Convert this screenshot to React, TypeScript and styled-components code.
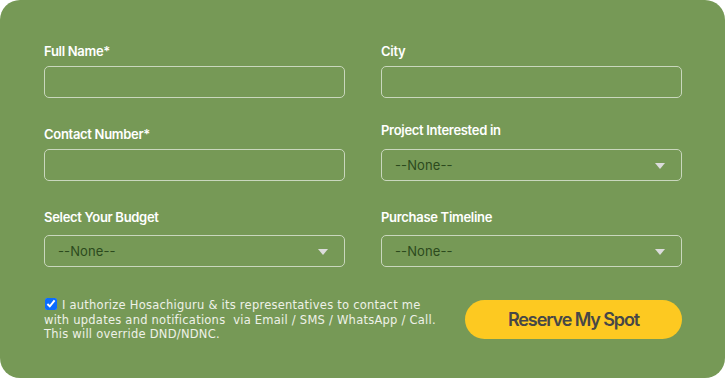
import React from 'react';
import styled, { createGlobalStyle } from 'styled-components';

const GlobalStyle = createGlobalStyle`
  html, body {
    margin: 0;
    padding: 0;
    background: #ffffff;
  }
  * {
    box-sizing: border-box;
  }
`;

const Panel = styled.form`
  width: 725px;
  height: 378px;
  background: #769956;
  border-radius: 20px;
  padding: 43px 43px 0 44px;
  font-family: Inter, 'Liberation Sans', sans-serif;
`;

const Row = styled.div<{ $mt?: number }>`
  display: grid;
  grid-template-columns: 301px 301px;
  column-gap: 36px;
  align-items: end;
  margin-top: ${p => p.$mt ?? 0}px;
`;

const Field = styled.div`
  display: flex;
  flex-direction: column;
`;

const Label = styled.label<{ $gap: number }>`
  font-size: 13px;
  line-height: 16px;
  font-weight: 600;
  letter-spacing: -0.3px;
  color: #ffffff;
  margin-bottom: ${p => p.$gap}px;
`;

const TextInput = styled.input`
  width: 100%;
  height: 32px;
  background: transparent;
  border: 1px solid #c9d7bd;
  border-radius: 5px;
  padding: 0 13px;
  font-family: inherit;
  font-size: 13px;
  color: #ffffff;

  &:focus {
    outline: none;
  }
`;

const SelectBox = styled.div`
  position: relative;
  height: 32px;
  border: 1px solid #c9d7bd;
  border-radius: 5px;
  display: flex;
  align-items: center;
  justify-content: space-between;
  padding: 0 16px 0 13px;
`;

const SelectValue = styled.span`
  font-size: 13px;
  color: #2c4a1d;
  letter-spacing: 0.1px;
`;

const Caret = styled.span`
  width: 0;
  height: 0;
  border-left: 5px solid transparent;
  border-right: 5px solid transparent;
  border-top: 6px solid #dcdcdc;
  margin-top: 1px;
`;

const Bottom = styled.div`
  display: flex;
  align-items: center;
  justify-content: space-between;
  margin-top: 31px;
`;

const Consent = styled.label`
  font-family: 'DejaVu Sans', 'Open Sans', sans-serif;
  font-size: 11.5px;
  line-height: 14.5px;
  color: #eef1e8;
  letter-spacing: 0.24px;
`;

const Check = styled.input`
  width: 12px;
  height: 12px;
  margin: 0 5px 0 1px;
  vertical-align: -1px;
  accent-color: #0a6cff;
`;

const ReserveButton = styled.button`
  width: 217px;
  height: 39px;
  border: none;
  border-radius: 20px;
  background: #fdc921;
  color: #474747;
  font-family: Inter, 'Liberation Sans', sans-serif;
  font-size: 18px;
  font-weight: 600;
  letter-spacing: -1.1px;
  cursor: pointer;
`;

function Select() {
  return (
    <SelectBox>
      <SelectValue>--None--</SelectValue>
      <Caret />
    </SelectBox>
  );
}

export default function App() {
  return (
    <>
      <GlobalStyle />
      <Panel onSubmit={e => e.preventDefault()}>
        <Row>
          <Field>
            <Label $gap={7}>Full Name*</Label>
            <TextInput type="text" />
          </Field>
          <Field>
            <Label $gap={7}>City</Label>
            <TextInput type="text" />
          </Field>
        </Row>
        <Row $mt={24}>
          <Field>
            <Label $gap={7}>Contact Number*</Label>
            <TextInput type="tel" />
          </Field>
          <Field>
            <Label $gap={11}>Project Interested in</Label>
            <Select />
          </Field>
        </Row>
        <Row $mt={28}>
          <Field>
            <Label $gap={10}>Select Your Budget</Label>
            <Select />
          </Field>
          <Field>
            <Label $gap={10}>Purchase Timeline</Label>
            <Select />
          </Field>
        </Row>
        <Bottom>
          <Consent>
            <Check type="checkbox" defaultChecked />
            I authorize Hosachiguru &amp; its representatives to contact me
            <br />
            with updates and notifications&nbsp; via Email / SMS / WhatsApp / Call.
            <br />
            This will override DND/NDNC.
          </Consent>
          <ReserveButton type="submit">Reserve My Spot</ReserveButton>
        </Bottom>
      </Panel>
    </>
  );
}
